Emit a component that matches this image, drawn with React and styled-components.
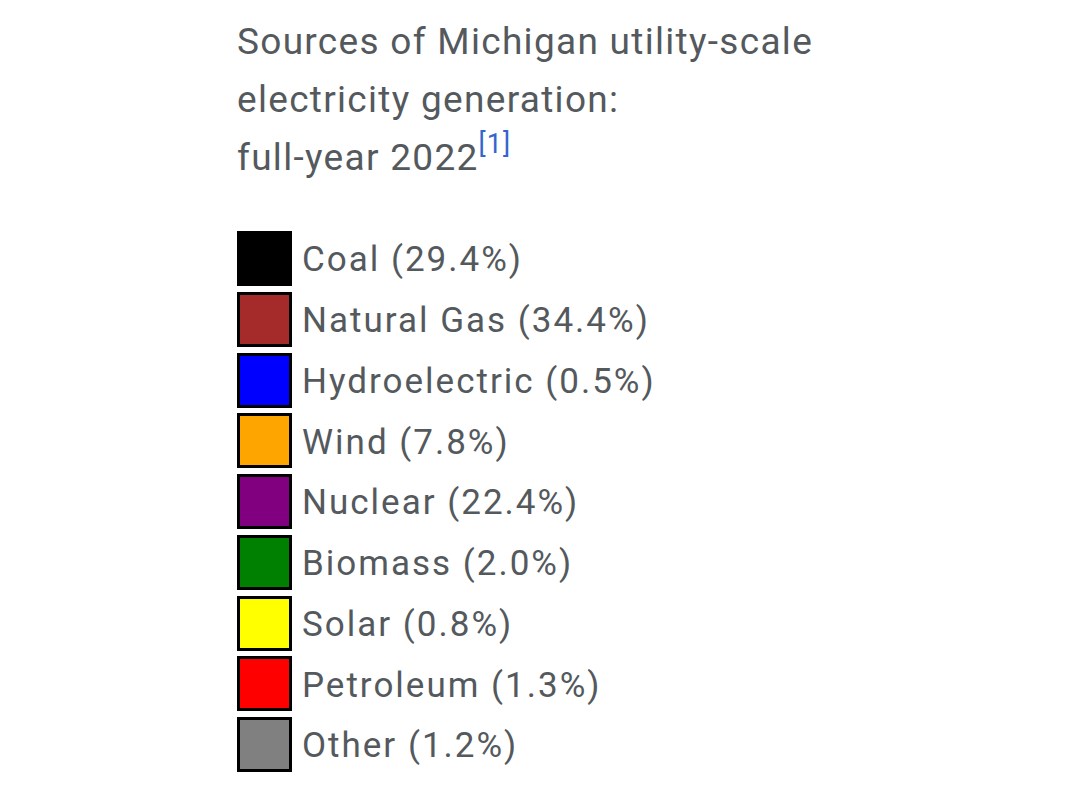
import styled, { createGlobalStyle } from "styled-components";

const Global = createGlobalStyle`
  body {
    margin: 0;
    background: #ffffff;
    font-family: Roboto, "Noto Sans", sans-serif;
  }
`;

const Page = styled.div`
  padding: 13px 0 0 237px;
  color: #54595d;
`;

const Caption = styled.div`
  font-size: 37px;
  line-height: 58px;
  letter-spacing: 1.3px;
  margin-bottom: 44px;
`;

const Ref = styled.sup`
  color: #3366cc;
  font-size: 27px;
  letter-spacing: 1px;
  line-height: 0;
  vertical-align: 17px;
`;

const Legend = styled.div`
  display: flex;
  flex-direction: column;
`;

const Row = styled.div`
  display: flex;
  align-items: center;
  height: 60.75px;
  gap: 10px;
`;

const Swatch = styled.span`
  box-sizing: border-box;
  width: 55px;
  height: 55px;
  border: 3px solid #000;
  background: ${(p) => p.$color};
  align-self: flex-start;
`;

const Label = styled.span`
  font-size: 35px;
  letter-spacing: 2px;
  margin-top: -3px;
`;

const items = [
  ["Coal (29.4%)", "#000000"],
  ["Natural Gas (34.4%)", "#a52a2a"],
  ["Hydroelectric (0.5%)", "#0000ff"],
  ["Wind (7.8%)", "#ffa500"],
  ["Nuclear (22.4%)", "#800080"],
  ["Biomass (2.0%)", "#008000"],
  ["Solar (0.8%)", "#ffff00"],
  ["Petroleum (1.3%)", "#ff0000"],
  ["Other (1.2%)", "#808080"],
];

export default function App() {
  return (
    <Page>
      <Global />
      <Caption>
        Sources of Michigan utility-scale
        <br />
        electricity generation:
        <br />
        full-year 2022<Ref>[1]</Ref>
      </Caption>
      <Legend>
        {items.map(([label, color]) => (
          <Row key={label}>
            <Swatch $color={color} />
            <Label>{label}</Label>
          </Row>
        ))}
      </Legend>
    </Page>
  );
}
